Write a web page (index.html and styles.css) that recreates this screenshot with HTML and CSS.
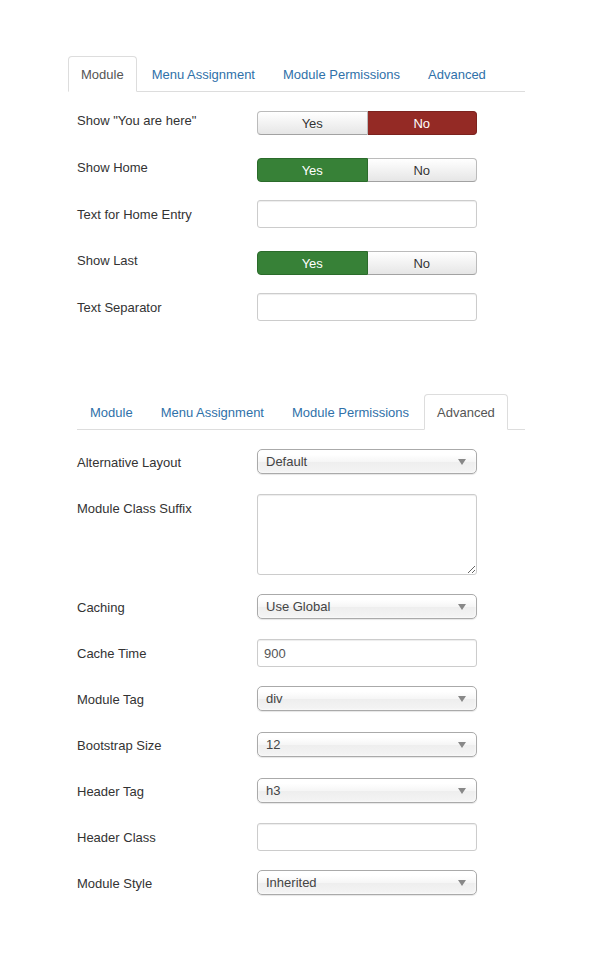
FILE: index.html
```html
<html>
	<head>
	<meta charset="utf-8"/>
		<link rel="stylesheet" href="styles.css">
	</head>
	<body>
		<div class="panel panel-first">
			<ul class="tabs">
				<li class="active"><a>Module</a></li>
				<li><a>Menu Assignment</a></li>
				<li><a>Module Permissions</a></li>
				<li><a>Advanced</a></li>
			</ul>
			<div class="form">
				<div class="row">
					<label>Show "You are here"</label>
					<div class="toggle">
						<span class="btn">Yes</span>
						<span class="btn no-on">No</span>
					</div>
				</div>
				<div class="row">
					<label>Show Home</label>
					<div class="toggle">
						<span class="btn yes-on">Yes</span>
						<span class="btn">No</span>
					</div>
				</div>
				<div class="row">
					<label>Text for Home Entry</label>
					<input class="text" type="text" value="">
				</div>
				<div class="row">
					<label>Show Last</label>
					<div class="toggle">
						<span class="btn yes-on">Yes</span>
						<span class="btn">No</span>
					</div>
				</div>
				<div class="row">
					<label>Text Separator</label>
					<input class="text" type="text" value="">
				</div>
			</div>
		</div>

		<div class="panel panel-second">
			<ul class="tabs">
				<li><a>Module</a></li>
				<li><a>Menu Assignment</a></li>
				<li><a>Module Permissions</a></li>
				<li class="active"><a>Advanced</a></li>
			</ul>
			<div class="form">
				<div class="row">
					<label>Alternative Layout</label>
					<div class="chosen"><span>Default</span><b class="arrow"></b></div>
				</div>
				<div class="row">
					<label>Module Class Suffix</label>
					<textarea class="area"></textarea>
				</div>
				<div class="row">
					<label>Caching</label>
					<div class="chosen"><span>Use Global</span><b class="arrow"></b></div>
				</div>
				<div class="row">
					<label>Cache Time</label>
					<input class="text" type="text" value="900">
				</div>
				<div class="row">
					<label>Module Tag</label>
					<div class="chosen"><span>div</span><b class="arrow"></b></div>
				</div>
				<div class="row">
					<label>Bootstrap Size</label>
					<div class="chosen"><span>12</span><b class="arrow"></b></div>
				</div>
				<div class="row">
					<label>Header Tag</label>
					<div class="chosen"><span>h3</span><b class="arrow"></b></div>
				</div>
				<div class="row">
					<label>Header Class</label>
					<input class="text" type="text" value="">
				</div>
				<div class="row">
					<label>Module Style</label>
					<div class="chosen"><span>Inherited</span><b class="arrow"></b></div>
				</div>
			</div>
		</div>
	</body>
</html>
```

FILE: styles.css
```css
body{
	margin: 0;
	font-family: "Liberation Sans", Arial, sans-serif;
	font-size: 13px;
	line-height: 18px;
	color: #333;
	background: #fff;
}
.panel-first{
	margin: 56px 0 0 68px;
	width: 457px;
}
.panel-first .form{
	padding-left: 9px;
	margin-top: 14px;
}
.panel-second{
	margin: 73px 0 0 77px;
	width: 448px;
}
.panel-second .form{
	margin-top: 18px;
}
.tabs{
	list-style: none;
	margin: 0;
	padding: 0;
	display: flex;
	border-bottom: 1px solid #ddd;
}
.tabs li{
	margin: 0 2px -1px 0;
}
.tabs a{
	display: block;
	padding: 9px 12px 7px;
	line-height: 18px;
	border: 1px solid transparent;
	border-radius: 4px 4px 0 0;
	color: #3071a9;
}
.tabs .active a{
	color: #555;
	background: #fff;
	border-color: #ddd #ddd transparent;
}
.row{
	display: flex;
	align-items: flex-start;
	min-height: 28px;
	margin-bottom: 18px;
}
.row label{
	width: 180px;
	flex: none;
	padding-top: 6px;
	line-height: 18px;
}
.toggle{
	display: flex;
	margin-top: 5px;
	width: 220px;
	height: 24px;
}
.btn{
	flex: 1;
	box-sizing: border-box;
	text-align: center;
	line-height: 23px;
	color: #333;
	background: linear-gradient(#fff, #e6e6e6);
	border: 1px solid #bbb;
	border-bottom-color: #a2a2a2;
	text-shadow: 0 1px 1px rgba(255,255,255,.75);
}
.btn:first-child{
	border-radius: 4px 0 0 4px;
}
.btn:last-child{
	border-radius: 0 4px 4px 0;
	border-left: 0;
}
.btn.no-on{
	background: #942a25;
	border-color: #7c221e;
	color: #fff;
	text-shadow: none;
}
.btn.yes-on{
	background: #378137;
	border-color: #2b6b2b;
	color: #fff;
	text-shadow: none;
}
.text, .area{
	box-sizing: border-box;
	width: 220px;
	margin: 0;
	padding: 4px 6px;
	font: inherit;
	line-height: 18px;
	color: #555;
	border: 1px solid #ccc;
	border-radius: 3px;
	box-shadow: inset 0 1px 1px rgba(0,0,0,.075);
	outline: none;
}
.text{
	height: 28px;
}
.area{
	height: 81px;
	resize: vertical;
}
.chosen{
	box-sizing: border-box;
	position: relative;
	width: 220px;
	height: 25px;
	margin-top: 1px;
	padding: 0 8px;
	line-height: 23px;
	color: #444;
	border: 1px solid #aaa;
	border-radius: 5px;
	background: linear-gradient(#fff 20%, #f6f6f6 50%, #eee 52%, #f4f4f4 100%);
	box-shadow: 0 0 3px #fff inset, 0 1px 1px rgba(0,0,0,.1);
}
.arrow{
	position: absolute;
	right: 10px;
	top: 9px;
	width: 0;
	height: 0;
	border-left: 4px solid transparent;
	border-right: 4px solid transparent;
	border-top: 6px solid #888;
}
```
